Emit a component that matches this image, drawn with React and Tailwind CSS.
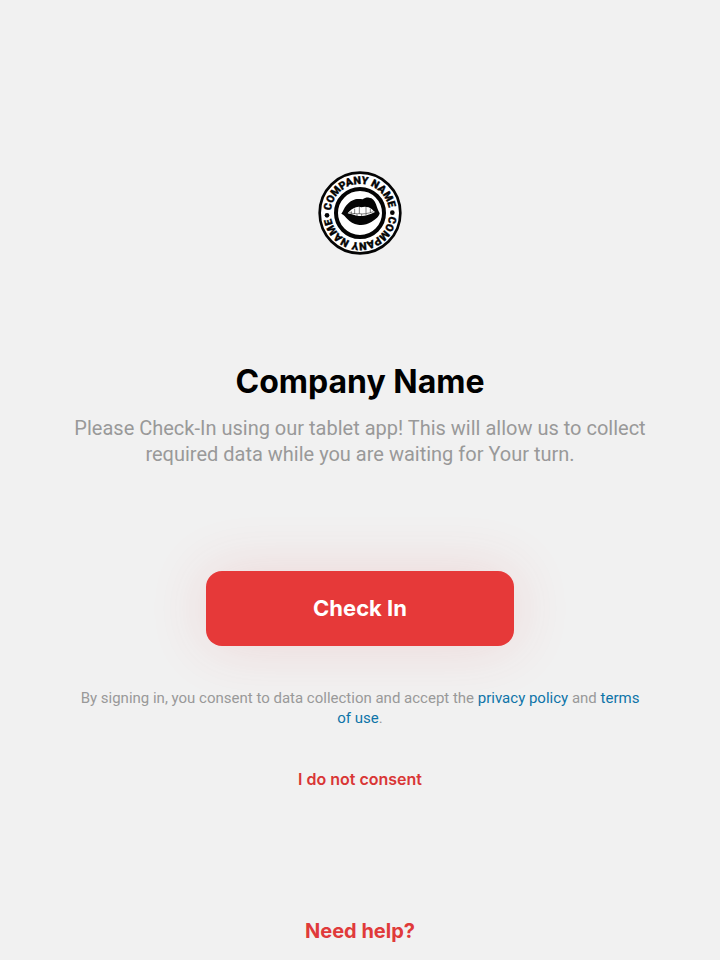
import React from "react";

const Logo = () => {
    return (
        <svg className="w-[100px] h-[100px]" viewBox="0 0 300 300" role="img" aria-label="Company Name logo">
            <defs>
                {/* both run clockwise, one over the top and one under the bottom */}
                <path id="arcTop" d="M 63 154 A 87 87 0 0 1 237 146" />
                <path id="arcBottom" d="M 237 148 A 87 87 0 0 1 63 156" />
            </defs>
            <circle cx="150" cy="150" r="121" fill="#fff" stroke="#050505" strokeWidth="8" />
            <circle cx="150" cy="150" r="72" fill="#fff" stroke="#050505" strokeWidth="12" />
            <g fill="#050505" stroke="#050505" strokeWidth="1" fontFamily="Roboto, sans-serif" fontWeight="900" fontSize="32" textAnchor="middle">
                <text><textPath href="#arcTop" startOffset="50%">COMPANY NAME</textPath></text>
                <text><textPath href="#arcBottom" startOffset="50%">COMPANY NAME</textPath></text>
            </g>
            <circle cx="51" cy="157" r="7" fill="#050505" />
            <circle cx="247" cy="149" r="7" fill="#050505" />
            <path
                fill="#050505"
                d="M94 152 C99 146 102 135 110 126 C118 117 126 112 136 109 C144 107 151 108 158 109 C164 105 170 103 177 104 C188 105 194 112 198 124 C201 133 204 142 209 151 C207 162 196 170 184 177 C171 185 157 187 144 185 C131 183 120 177 112 168 C106 162 102 155 94 152 Z"
            />
            <path
                fill="#fff"
                d="M113 151 C120 143 128 136 138 133 C144 131 149 131 154 133 C160 131 168 131 176 133 C184 136 188 142 195 147 C188 151 180 154 172 156 C161 160 143 160 133 156 C126 153 120 154 113 151 Z"
            />
            <path
                fill="none"
                stroke="#050505"
                strokeWidth="1.5"
                d="M124 145 V152 M134 137 V153 M148 132 V152 M168 132 V151 M181 137 V149 M118 149 C130 153 143 152 148 152 C158 154 174 152 190 146 M141 153 V159 M155 153 V159 M168 152 V157"
            />
        </svg>
    );
};

const App = () => {
    return (
        <div className="flex flex-col items-center min-h-screen px-16 bg-[#f1f1f1] font-['Inter',sans-serif] text-center">
            <header className="flex flex-col items-center pt-[163px]">
                <Logo />
                <h1 className="mt-[99px] text-[32px] leading-10 font-bold text-black">Company Name</h1>
                <p className="max-w-[580px] mt-[13px] font-['Roboto',sans-serif] text-[20px] leading-[26px] text-[#999]">
                    Please Check-In using our tablet app! This will allow us to collect required data while you are waiting for Your turn.
                </p>
            </header>

            <main className="flex flex-col items-center mt-[104px]">
                <button
                    type="button"
                    className="w-[308px] h-[75px] rounded-2xl bg-[#e63939] text-[22px] font-bold text-white shadow-[0_0_60px_rgba(230,57,57,0.14)]"
                >
                    Check In
                </button>
                <p className="max-w-[570px] mt-[42px] font-['Roboto',sans-serif] text-[15px] leading-5 text-[#999]">
                    By signing in, you consent to data collection and accept the{" "}
                    <a href="#privacy" className="text-[#0e74a8]">privacy policy</a> and{" "}
                    <a href="#terms" className="text-[#0e74a8]">terms of use</a>.
                </p>
                <button type="button" className="mt-[39px] text-[16px] leading-6 font-semibold text-[#d93636]">
                    I do not consent
                </button>
            </main>

            <footer className="mt-auto pt-10 pb-[15px]">
                <a href="#help" className="block text-[20px] leading-7 font-bold text-[#e03a3a]">Need help?</a>
            </footer>
        </div>
    );
};

export default App;
